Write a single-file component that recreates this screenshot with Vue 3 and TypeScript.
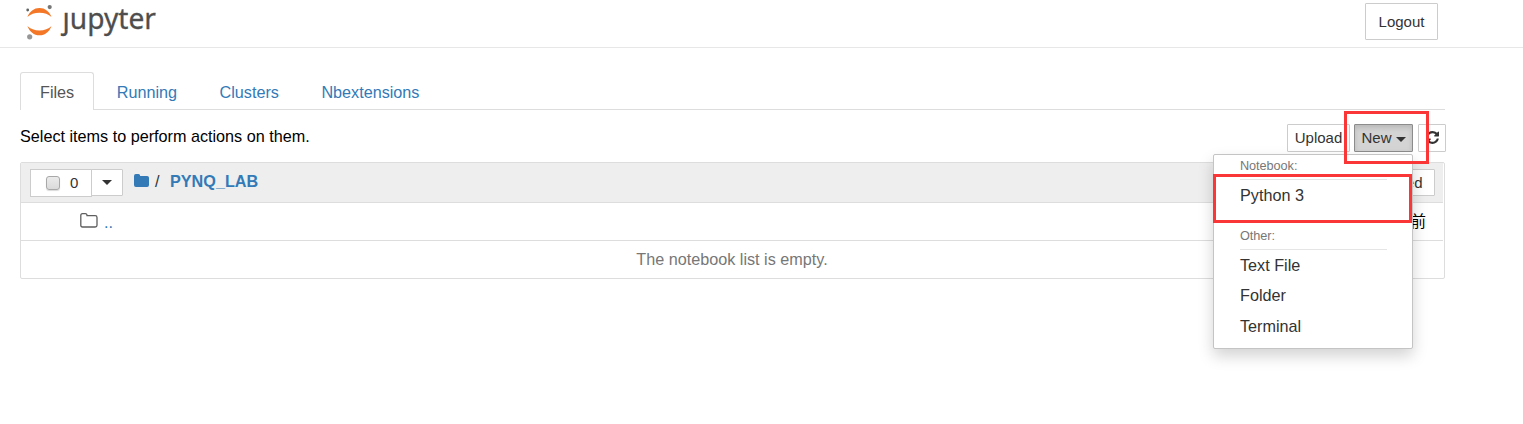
<script setup lang="ts">
import { ref } from 'vue'

interface MenuGroup {
  title: string
  items: string[]
}

const tabs: string[] = ['Files', 'Running', 'Clusters', 'Nbextensions']
const activeTab = ref<string>('Files')

const groups: MenuGroup[] = [
  { title: 'Notebook:', items: ['Python 3'] },
  { title: 'Other:', items: ['Text File', 'Folder', 'Terminal'] },
]
</script>

<template>
  <div class="page">
    <header class="header">
      <svg class="logo" width="134" height="44" viewBox="0 0 134 44" role="img" aria-label="jupyter">
        <path d="M2.400 17.100C4.600 11.400 9 8 14.500 8s9.900 3.400 12 9.100C23.600 14.200 19.400 12.700 14.500 12.700S5.300 14.200 2.400 17.100Z" fill="#f37726" />
        <path d="M2.400 25.900C5.300 28.800 9.600 30.400 14.500 30.400s9.100-1.600 12-4.500C24.400 31.700 20 35.200 14.500 35.200S4.600 31.700 2.400 25.900Z" fill="#f37726" />
        <circle cx="24.700" cy="7.100" r="2.100" fill="#767677" />
        <circle cx="2.700" cy="10" r="1.400" fill="#616262" />
        <circle cx="4.700" cy="36.800" r="2.600" fill="#989798" />
        <text class="logo-text" x="37.500" y="29" textLength="93.500" lengthAdjust="spacingAndGlyphs">ȷupyter</text>
      </svg>
      <button class="btn logout">Logout</button>
    </header>

    <main class="content">
      <nav class="tabs">
        <a
          v-for="tab in tabs"
          :key="tab"
          class="tab"
          :class="{ active: tab === activeTab }"
          @click="activeTab = tab"
        >{{ tab }}</a>
      </nav>

      <div class="toolbar">
        <span class="hint">Select items to perform actions on them.</span>
        <div class="actions">
          <button class="btn upload">Upload</button>
          <div class="new-wrap">
            <button class="btn new">New<i class="caret"></i></button>
            <div class="menu">
              <section v-for="group in groups" :key="group.title" class="group">
                <div class="group-title">{{ group.title }}</div>
                <a v-for="item in group.items" :key="item" class="item">{{ item }}</a>
              </section>
              <div class="mark mark-item"></div>
            </div>
            <div class="mark mark-new"></div>
          </div>
          <button class="btn refresh" aria-label="Refresh">
            <svg width="13" height="13" viewBox="0 0 1536 1536">
              <path fill="#333" d="M1511 928q0 5-1 7-64 268-268 434.500T764 1536q-146 0-282.500-55T238 1324l-129 129q-19 19-45 19t-45-19-19-45V960q0-26 19-45t45-19h448q26 0 45 19t19 45-19 45l-137 137q71 66 161 102t187 36q134 0 250-65t186-179q11-17 53-117 8-23 30-23h192q13 0 22.500 9.500t9.500 22.500zm25-800v448q0 26-19 45t-45 19h-448q-26 0-45-19t-19-45 19-45l138-138Q969 256 768 256q-134 0-250 65T332 500q-11 17-53 117-8 23-30 23H50q-13 0-22.500-9.500T18 608v-7q65-268 270-434.500T768 0q146 0 284 55.500T1297 212l130-129q19-19 45-19t45 19 19 45z" />
            </svg>
          </button>
        </div>
      </div>

      <div class="list">
        <div class="row list-head">
          <div class="select-all"><i class="checkbox"></i><span>0</span></div>
          <button class="btn select-drop" aria-label="Select"><i class="caret"></i></button>
          <svg class="home" width="15" height="13" viewBox="0 0 15 13">
            <path fill="#337ab7" d="M0 1.900Q0 0 1.900 0H4.400Q6.200 0 6.200 1.900H13.100Q15 1.900 15 3.800V11.100Q15 13 13.100 13H1.900Q0 13 0 11.100Z" />
          </svg>
          <span class="slash">/</span>
          <a class="crumb">PYNQ_LAB</a>
          <button class="btn sort">Last Modified</button>
        </div>
        <div class="row list-item">
          <svg class="folder" width="18" height="15" viewBox="0 0 18 15">
            <path fill="none" stroke="#5e5e5e" stroke-width="1.300" d="M.8 2.500Q.8.700 2.500.700H5.300Q7 .7 7 2.600H15.200Q17 2.600 17 4.400V12.300Q17 14 15.200 14H2.500Q.8 14 .8 12.300Z" />
          </svg>
          <a class="up">..</a>
          <span class="time">几秒前</span>
        </div>
        <div class="row list-empty">The notebook list is empty.</div>
      </div>
    </main>
  </div>
</template>

<style>
body {
  margin: 0;
  background: #fff;
}
</style>

<style scoped>
.page,
.page * {
  box-sizing: border-box;
}
.page {
  height: 424px;
  overflow: hidden;
  font: 16.200px/20px "Liberation Sans", Arial, "Noto Sans CJK SC", sans-serif;
  color: #000;
}
.header {
  display: flex;
  justify-content: space-between;
  align-items: flex-start;
  height: 48px;
  padding: 0 85px 0 25px;
  border-bottom: 1px solid #e7e7e7;
}
.logo {
  display: block;
}
.logo-text {
  font: 28.500px "Noto Sans", sans-serif;
  fill: #4e4e4e;
  stroke: #4e4e4e;
  stroke-width: 0.3px;
}
.btn {
  display: flex;
  align-items: center;
  justify-content: center;
  margin: 0;
  padding: 0;
  height: 28px;
  border: 1px solid #ccc;
  border-radius: 1px;
  background: #fff;
  color: #333;
  font: 15px/20px "Liberation Sans", Arial, sans-serif;
}
.logout {
  width: 73px;
  height: 37px;
  margin-top: 3px;
}
.content {
  width: 1426px;
  margin-left: 20px;
  padding-top: 24px;
}
.tabs {
  display: flex;
  gap: 2.500px;
  width: 1425px;
  height: 38px;
  border-bottom: 1px solid #ddd;
}
.tab {
  height: 38px;
  padding: 9px 19px 0;
  border: 1px solid transparent;
  border-bottom: 0;
  border-radius: 3px 3px 0 0;
  color: #337ab7;
}
.tab.active {
  border-color: #ddd;
  background: #fff;
  color: #555;
}
.toolbar {
  display: flex;
  justify-content: space-between;
  height: 52px;
}
.hint {
  padding-top: 16px;
}
.actions {
  display: flex;
  padding-top: 14px;
}
.upload {
  width: 63px;
  margin-right: 4px;
}
.new-wrap {
  position: relative;
  margin-right: 5px;
}
.new {
  width: 59px;
  border-color: #8c8c8c;
  background: #d4d4d4;
  box-shadow: inset 0 3px 5px rgba(0, 0, 0, 0.125);
}
.refresh {
  width: 28px;
}
.refresh svg {
  margin-bottom: 1px;
}
.caret {
  border: 5px solid transparent;
  border-top-color: #333;
  border-bottom: 0;
}
.new .caret {
  margin: 2px 0 0 4px;
}
.menu {
  position: absolute;
  z-index: 2;
  top: 30px;
  right: 0;
  width: 200px;
  height: 195px;
  border: 1px solid #c4c4c4;
  border-radius: 2px;
  background: #fff;
  box-shadow: 0 7px 15px rgba(0, 0, 0, 0.175);
}
.group {
  padding: 0 25px 0 26px;
}
.group:first-child {
  height: 70px;
}
.group-title {
  height: 25px;
  padding-top: 1px;
  border-bottom: 1px solid #e5e5e5;
  color: #777;
  font-size: 12.700px;
  letter-spacing: -0.05px;
}
.item {
  display: block;
  height: 30.400px;
  padding-top: 5px;
  color: #333;
}
.mark {
  position: absolute;
  z-index: 3;
  border: 3px solid #fb3636;
  pointer-events: none;
}
.mark-item {
  top: 19px;
  left: -1px;
  width: 199px;
  height: 49px;
}
.mark-new {
  top: -13px;
  left: -10px;
  width: 85px;
  height: 53px;
}
.list {
  width: 1425px;
  height: 117px;
  border: 1px solid #ddd;
  border-radius: 2px;
  padding-right: 1px;
}
.row {
  display: flex;
}
.list-head {
  height: 40px;
  padding: 6px 8px 0 9px;
  border-bottom: 1px solid #ddd;
  background: #eee;
}
.select-all {
  display: flex;
  align-items: center;
  width: 62px;
  height: 28px;
  padding-left: 15px;
  border: 1px solid #ccc;
  background: #fff;
  color: #333;
  font-size: 15px;
}
.checkbox {
  width: 14px;
  height: 14px;
  margin-right: 10px;
  border: 1px solid #a8a8a8;
  border-radius: 3px;
  background: linear-gradient(#ebebeb, #dadada);
  box-shadow: 0 1px 1px rgba(0, 0, 0, 0.15);
}
.select-drop {
  width: 32px;
  height: 27px;
  margin-left: -1px;
}
.home {
  margin: 5px 0 0 11px;
}
.slash {
  margin: 2px 0 0 6px;
  color: #333;
}
.crumb {
  margin: 2px 0 0 10.500px;
  color: #337ab7;
  font-weight: bold;
}
.sort {
  justify-content: flex-end;
  width: 115px;
  height: 27px;
  margin-left: auto;
  padding-right: 11.500px;
}
.list-item {
  height: 38px;
  padding: 9px 17px 0 59px;
  border-bottom: 1px solid #ddd;
}
.folder {
  margin-top: 0.500px;
}
.up {
  margin-left: 6px;
  color: #337ab7;
}
.time {
  margin-left: auto;
  font-size: 15.500px;
}
.list-empty {
  justify-content: center;
  padding-top: 8px;
  color: #777;
}
</style>
